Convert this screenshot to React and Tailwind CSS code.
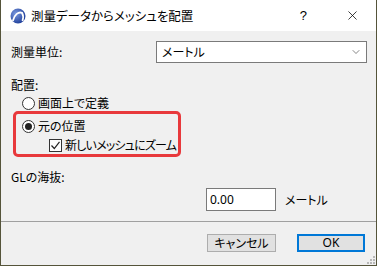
import React from 'react';
import { ChevronDown, X } from 'lucide-react';

const font = "font-['Noto_Sans_CJK_JP','Noto_Sans',sans-serif] [font-feature-settings:'palt']";

const AppIcon = () => (
  <svg width="16" height="16" viewBox="0 0 16 16">
    <defs>
      <radialGradient id="g" cx="35%" cy="35%" r="70%">
        <stop offset="0%" stopColor="#7a98de" />
        <stop offset="100%" stopColor="#1f3f9a" />
      </radialGradient>
    </defs>
    <circle cx="8" cy="8" r="7.5" fill="url(#g)" />
    <path d="M3 12.5 C4.5 6.5 8.5 3.5 12 4.8 C13.4 7.3 13.4 10 12.6 12.4" fill="none" stroke="#fff" strokeWidth="1.8" strokeLinecap="round" />
  </svg>
);

const Radio = ({ checked, label }) => (
  <div className="flex items-center h-[16px] gap-[3px] whitespace-nowrap">
    <span className="w-[13px] h-[13px] rounded-full border border-[#333] bg-white flex items-center justify-center">
      {checked && <span className="w-[7px] h-[7px] rounded-full bg-[#222]" />}
    </span>
    <span>{label}</span>
  </div>
);

export default function App() {
  return (
    <div className={`w-[377px] h-[266px] flex flex-col border-x border-b border-[#55543a] bg-[#f0f0f0] text-[12px] leading-[16px] text-black ${font}`}>
      {/* Title bar */}
      <div className="h-[31px] bg-white flex items-center pl-[9px]">
        <AppIcon />
        <span className="ml-[5px] text-[12.5px]">測量データからメッシュを配置</span>
        <span className="ml-auto mr-[38px] text-[13px] font-['Liberation_Sans',sans-serif]">?</span>
        <X className="w-[15px] h-[15px] mr-[16px]" strokeWidth={1.2} />
      </div>

      {/* Body */}
      <div className="flex flex-col pl-[10px] pr-[9px]">
        <div className="flex items-center mt-[10px] h-[22px]">
          <span>測量単位:</span>
          <div className="ml-auto w-[211px] h-[22px] border border-[#7a7a7a] bg-white flex items-center pl-[5px] pr-[4px]">
            <span>メートル</span>
            <ChevronDown className="ml-auto w-[12px] h-[12px] text-[#444]" strokeWidth={1.3} />
          </div>
        </div>

        <div className="mt-[14px]">配置:</div>

        <div className="ml-[11px] mt-[2px]">
          <Radio label="画面上で定義" />
        </div>

        <div className="ml-[2px] w-[168px] border-[3px] border-[#e8393c] rounded-[5px] pl-[6px] pt-[4px] pb-[1px] flex flex-col gap-[3px]">
          <Radio checked label="元の位置" />
          <div className="flex items-center h-[16px] gap-[3px] ml-[27px] whitespace-nowrap">
            <span className="w-[13px] h-[13px] shrink-0 border border-[#333] bg-white flex items-center justify-center">
              <svg width="11" height="11" viewBox="0 0 11 11">
                <path d="M1.5 5.5 L4.3 8.5 L9.5 1.8" fill="none" stroke="#222" strokeWidth="1.2" />
              </svg>
            </span>
            <span className="tracking-[-0.8px]">新しいメッシュにズーム</span>
          </div>
        </div>

        <div className="mt-[12px]">GLの海抜:</div>

        <div className="flex items-center mt-[3px] ml-[195px] gap-[9px]">
          <div className="w-[70px] h-[23px] border border-[#7a7a7a] bg-white flex items-center pl-[3px] font-['Noto_Sans',sans-serif] text-[12px]">0.00</div>
          <span>メートル</span>
        </div>
      </div>

      <div className="mt-[10px] h-px bg-[#a0a0a0]" />

      <div className="flex justify-end gap-[21px] mt-[12px] pr-[11px]">
        <button className={`w-[69px] h-[18px] bg-[#e1e1e1] border border-[#adadad] flex items-center justify-center text-[12px] ${font}`}>キャンセル</button>
        <button className="w-[68px] h-[18px] bg-[#e1e1e1] border-2 border-[#0078d7] flex items-center justify-center text-[12px] font-['Noto_Sans',sans-serif]">OK</button>
      </div>

      <div className="mt-auto flex justify-end pr-[1px] pb-[1px]">
        <svg width="8" height="8" viewBox="0 0 8 8" fill="#b8b8b8">
          <rect x="6" y="0" width="2" height="2" />
          <rect x="3" y="3" width="2" height="2" />
          <rect x="6" y="3" width="2" height="2" />
          <rect x="0" y="6" width="2" height="2" />
          <rect x="3" y="6" width="2" height="2" />
          <rect x="6" y="6" width="2" height="2" />
        </svg>
      </div>
    </div>
  );
}
